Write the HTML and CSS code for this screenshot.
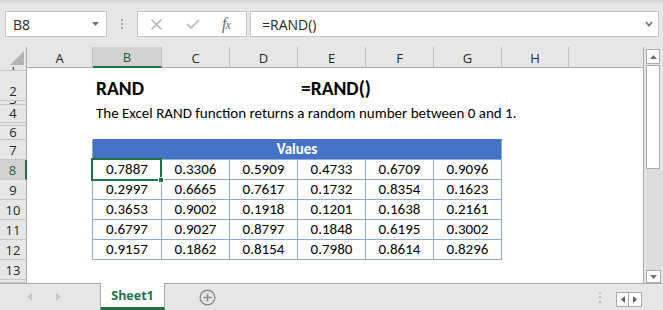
FILE: index.html
```html
<!DOCTYPE html>
<html lang="en">
<head>
    <meta charset="UTF-8">
    <meta name="viewport" content="width=device-width, initial-scale=1.0">
    <title>RAND - Excel</title>
    <link rel="stylesheet" href="styles.css">
</head>
<body>

    <!-- Formula bar -->
    <div class="toolbar">
        <div class="namebox">
            <span>B8</span>
            <svg width="8" height="5" viewBox="0 0 8 5"><polygon points="0,0 7,0 3.5,4" fill="#6e6e6e"/></svg>
        </div>
        <div class="grip"><i></i><i></i><i></i></div>
        <div class="fxbtns">
            <svg class="btn-x" width="11" height="11" viewBox="0 0 11 11"><path d="M0.5 0.5 L10.5 10.5 M10.5 0.5 L0.5 10.5" stroke="#a9a9a9" stroke-width="1.2" fill="none"/></svg>
            <svg class="btn-ok" width="14" height="10" viewBox="0 0 14 10"><path d="M1 5 L5 9 L13 1" stroke="#c4c4c4" stroke-width="2" fill="none"/></svg>
            <span class="fx">f<span>x</span></span>
        </div>
        <div class="formula">
            <span>=RAND()</span>
            <svg width="8" height="6" viewBox="0 0 8 6"><path d="M1 1 L4 4.5 L7 1" stroke="#7a7a7a" stroke-width="1.8" fill="none"/></svg>
        </div>
    </div>

    <div class="main">
        <div class="sheet">
            <div class="row head">
                <div class="corner"><svg width="14" height="14" viewBox="0 0 14 14"><polygon points="14,0 14,14 0,14" fill="#b4b4b4"/></svg></div>
                <div class="ch">A</div>
                <div class="ch on">B</div>
                <div class="ch">C</div>
                <div class="ch">D</div>
                <div class="ch">E</div>
                <div class="ch">F</div>
                <div class="ch">G</div>
                <div class="ch">H</div>
                <div class="ch last"></div>
            </div>

            <div class="row r1"><div class="rh">1</div></div>
            <div class="row r2">
                <div class="rh">2</div>
                <div class="c title cb">RAND</div>
                <div class="c title ce">=RAND()</div>
            </div>
            <div class="row r3"><div class="rh">3</div></div>
            <div class="row r4">
                <div class="rh">4</div>
                <div class="c cb">The Excel RAND function returns a random number between 0 and 1.</div>
            </div>
            <div class="row r5"><div class="rh"></div></div>
            <div class="row r6"><div class="rh">6</div></div>
            <div class="row">
                <div class="rh">7</div>
                <div class="c thead">Values</div>
            </div>
            <div class="row">
                <div class="rh on">8</div>
                <div class="c t first">0.7887<span class="sel"><i></i></span></div>
                <div class="c t">0.3306</div>
                <div class="c t">0.5909</div>
                <div class="c t">0.4733</div>
                <div class="c t">0.6709</div>
                <div class="c t">0.9096</div>
            </div>
            <div class="row">
                <div class="rh">9</div>
                <div class="c t first">0.2997</div>
                <div class="c t">0.6665</div>
                <div class="c t">0.7617</div>
                <div class="c t">0.1732</div>
                <div class="c t">0.8354</div>
                <div class="c t">0.1623</div>
            </div>
            <div class="row">
                <div class="rh">10</div>
                <div class="c t first">0.3653</div>
                <div class="c t">0.9002</div>
                <div class="c t">0.1918</div>
                <div class="c t">0.1201</div>
                <div class="c t">0.1638</div>
                <div class="c t">0.2161</div>
            </div>
            <div class="row">
                <div class="rh">11</div>
                <div class="c t first">0.6797</div>
                <div class="c t">0.9027</div>
                <div class="c t">0.8797</div>
                <div class="c t">0.1848</div>
                <div class="c t">0.6195</div>
                <div class="c t">0.3002</div>
            </div>
            <div class="row">
                <div class="rh">12</div>
                <div class="c t first">0.9157</div>
                <div class="c t">0.1862</div>
                <div class="c t">0.8154</div>
                <div class="c t">0.7980</div>
                <div class="c t">0.8614</div>
                <div class="c t">0.8296</div>
            </div>
            <div class="row"><div class="rh">13</div></div>
            <div class="row r14"><div class="rh"></div></div>
        </div>

        <!-- Vertical scrollbar -->
        <div class="vscroll">
            <div class="sbtn"><svg width="7" height="4" viewBox="0 0 7 4"><polygon points="0,4 7,4 3.5,0" fill="#6e6e6e"/></svg></div>
            <div class="thumb"></div>
            <div class="track"></div>
            <div class="sbtn down"><svg width="7" height="4" viewBox="0 0 7 4"><polygon points="0,0 7,0 3.5,4" fill="#6e6e6e"/></svg></div>
        </div>
    </div>

    <!-- Sheet tabs -->
    <div class="tabs">
        <div class="nav">
            <svg width="5" height="8" viewBox="0 0 5 8"><polygon points="5,0 5,8 0,4" fill="#c6c6c6"/></svg>
            <svg width="5" height="8" viewBox="0 0 5 8"><polygon points="0,0 0,8 5,4" fill="#c6c6c6"/></svg>
        </div>
        <div class="tab">Sheet1</div>
        <div class="add">
            <svg width="17" height="17" viewBox="0 0 17 17"><circle cx="8.5" cy="8.5" r="7.3" stroke="#8c8c8c" stroke-width="1.4" fill="none"/><path d="M8.5 4.5 V12.5 M4.5 8.5 H12.5" stroke="#8c8c8c" stroke-width="1.6"/></svg>
        </div>
        <div class="spacer"></div>
        <div class="grip small"><i></i><i></i><i></i></div>
        <div class="hbtns">
            <div><svg width="4" height="7" viewBox="0 0 4 7"><polygon points="4,0 4,7 0,3.5" fill="#606060"/></svg></div>
            <div><svg width="4" height="7" viewBox="0 0 4 7"><polygon points="0,0 0,7 4,3.5" fill="#606060"/></svg></div>
        </div>
    </div>

</body>
</html>
```

FILE: styles.css
```css
* {
    box-sizing: border-box;
}

body {
    margin: 0;
    width: 663px;
    height: 310px;
    overflow: hidden;
    background-color: #e6e6e6;
    font-family: 'Open Sans', 'Noto Sans', sans-serif;
    color: #262626;
}

/* formula bar */
.toolbar {
    height: 47px;
    display: flex;
    align-items: flex-start;
    padding: 11px 0 0 5px;
    background: linear-gradient(#d3d3d3, #e6e6e6 4px);
}

.namebox {
    width: 102px;
    height: 26px;
    background-color: #fff;
    border: 1px solid #c6c6c6;
    display: flex;
    align-items: center;
    justify-content: space-between;
    padding: 0 6px 0 7px;
    font-size: 14px;
}

.grip {
    width: 30px;
    height: 26px;
    display: flex;
    flex-direction: column;
    align-items: center;
    justify-content: center;
    gap: 2px;
}

.grip i {
    display: block;
    width: 2px;
    height: 2px;
    background-color: #a8a8a8;
}

.fxbtns {
    width: 110px;
    height: 26px;
    background-color: #fff;
    border: 1px solid #c6c6c6;
    display: flex;
    align-items: center;
    padding-left: 13px;
}

.btn-ok {
    margin-left: 24px;
}

.fx {
    margin-left: 22px;
    font-family: 'Liberation Serif', serif;
    font-style: italic;
    font-size: 16px;
    color: #6a6a6a;
    letter-spacing: -1px;
}

.fx span {
    font-size: 12px;
}

.formula {
    width: 409px;
    height: 26px;
    margin-left: 3px;
    background-color: #fff;
    border: 1px solid #c6c6c6;
    display: flex;
    align-items: center;
    justify-content: space-between;
    padding: 0 5px 0 11px;
    font-size: 14px;
}

/* grid */
.main {
    display: flex;
    height: 236px;
}

.sheet {
    width: 644px;
    height: 236px;
    overflow: hidden;
    border-right: 1px solid #ababab;
    background-color: #fff;
}

.row {
    display: grid;
    grid-template-columns: 27px 66px 69px 68px 68px 68px 68px 68px 67px 74px;
    height: 20px;
}

.r1, .r3 { height: 4px; }
.r2 { height: 30px; }
.r4 { height: 18px; }
.r5 { height: 3px; }
.r6 { height: 14px; }
.r14 { height: 3px; }

.head .ch, .corner {
    background-color: #e6e6e6;
    border-right: 1px solid #c0c0c0;
    border-bottom: 1px solid #ababab;
    display: flex;
    align-items: center;
    justify-content: center;
    font-size: 13px;
    padding-top: 1px;
}

.corner {
    border-right-color: #ababab;
    align-items: flex-end;
    justify-content: flex-end;
    padding: 0 2px 2px 0;
}

.corner svg {
    display: block;
}

.ch.last {
    border-right: none;
}

.ch.on {
    background-color: #d2d2d2;
    border-bottom: 2px solid #217346;
    color: #1b5e39;
}

.rh {
    background-color: #e6e6e6;
    border-right: 1px solid #ababab;
    border-bottom: 1px solid #c6c6c6;
    display: flex;
    align-items: flex-end;
    justify-content: center;
    overflow: hidden;
    font-size: 13px;
    line-height: 16px;
    padding-bottom: 1px;
}

.r1 .rh, .r3 .rh {
    line-height: 10px;
    padding-bottom: 0;
}

.r6 .rh {
    line-height: 13px;
    padding-bottom: 0;
}

.rh.on {
    background-color: #d2d2d2;
    border-right: 2px solid #217346;
    color: #1b5e39;
}

.c {
    font-family: 'Carlito', 'Lato', sans-serif;
    font-size: 15px;
    color: #000;
    display: flex;
    align-items: flex-end;
    white-space: nowrap;
    line-height: 16px;
    padding: 0 0 2px 3px;
}

.cb { grid-column: 3; }
.ce { grid-column: 6; }

.title {
    font-size: 19.5px;
    font-weight: bold;
    line-height: 22px;
    padding-bottom: 2px;
}

/* table */
.thead {
    grid-column: 3 / span 6;
    justify-content: center;
    padding: 0 0 2px 0;
    background-color: #4472c4;
    color: #fff;
    font-weight: bold;
    border-right: 1px solid #8eaadb;
    border-bottom: 1px solid #8eaadb;
    box-shadow: -1px 0 0 #8eaadb, 0 -1px 0 #4472c4;
}

.t {
    justify-content: center;
    padding: 0 0 2px 0;
    border-right: 1px solid #8eaadb;
    border-bottom: 1px solid #8eaadb;
}

.t.first {
    grid-column: 3;
    position: relative;
    box-shadow: -1px 0 0 #8eaadb;
}

.sel {
    position: absolute;
    left: -2px;
    top: -2px;
    width: 71px;
    height: 23px;
    border: 2px solid #217346;
    z-index: 2;
}

.sel i {
    position: absolute;
    right: -4px;
    bottom: -4px;
    width: 6px;
    height: 6px;
    background-color: #217346;
    border: 1px solid #fff;
}

/* scrollbar */
.vscroll {
    width: 19px;
    display: flex;
    flex-direction: column;
    padding: 2px 3px 0 2px;
}

.sbtn {
    height: 15px;
    background-color: #fff;
    border: 1px solid #ababab;
    display: flex;
    align-items: center;
    justify-content: center;
}

.thumb {
    height: 104px;
    margin-top: 1px;
    background-color: #fff;
    border: 1px solid #ababab;
}

.track {
    flex: 1;
    background-color: #dcdcdc;
    margin-right: -3px;
}

.sbtn.down {
    height: 13px;
    margin-right: -1px;
}

/* sheet tabs */
.tabs {
    height: 27px;
    display: flex;
    border-top: 1px solid #ababab;
}

.nav {
    width: 100px;
    display: flex;
    align-items: center;
    padding: 0 0 1px 27px;
    gap: 24px;
}

.tab {
    width: 65px;
    height: 27px;
    margin-top: -1px;
    background-color: #fff;
    border-left: 1px solid #ababab;
    border-right: 1px solid #ababab;
    border-bottom: 3px solid #217346;
    display: flex;
    align-items: center;
    justify-content: center;
    font-size: 12.5px;
    font-weight: bold;
    color: #217346;
    padding-top: 1px;
}

.add {
    margin-left: 34px;
    display: flex;
    align-items: center;
}

.add svg {
    display: block;
}

.spacer {
    flex: 1;
}

.grip.small {
    width: 2px;
    height: 26px;
    gap: 2.5px;
}

.grip.small i {
    background-color: #c0c0c0;
}

.hbtns {
    display: flex;
    margin: 8px 21px 0 15px;
    height: 15px;
}

.hbtns div {
    width: 13px;
    height: 15px;
    background-color: #fff;
    border: 1px solid #ababab;
    display: flex;
    align-items: center;
    justify-content: center;
}

.hbtns div + div {
    border-left: none;
}
```
